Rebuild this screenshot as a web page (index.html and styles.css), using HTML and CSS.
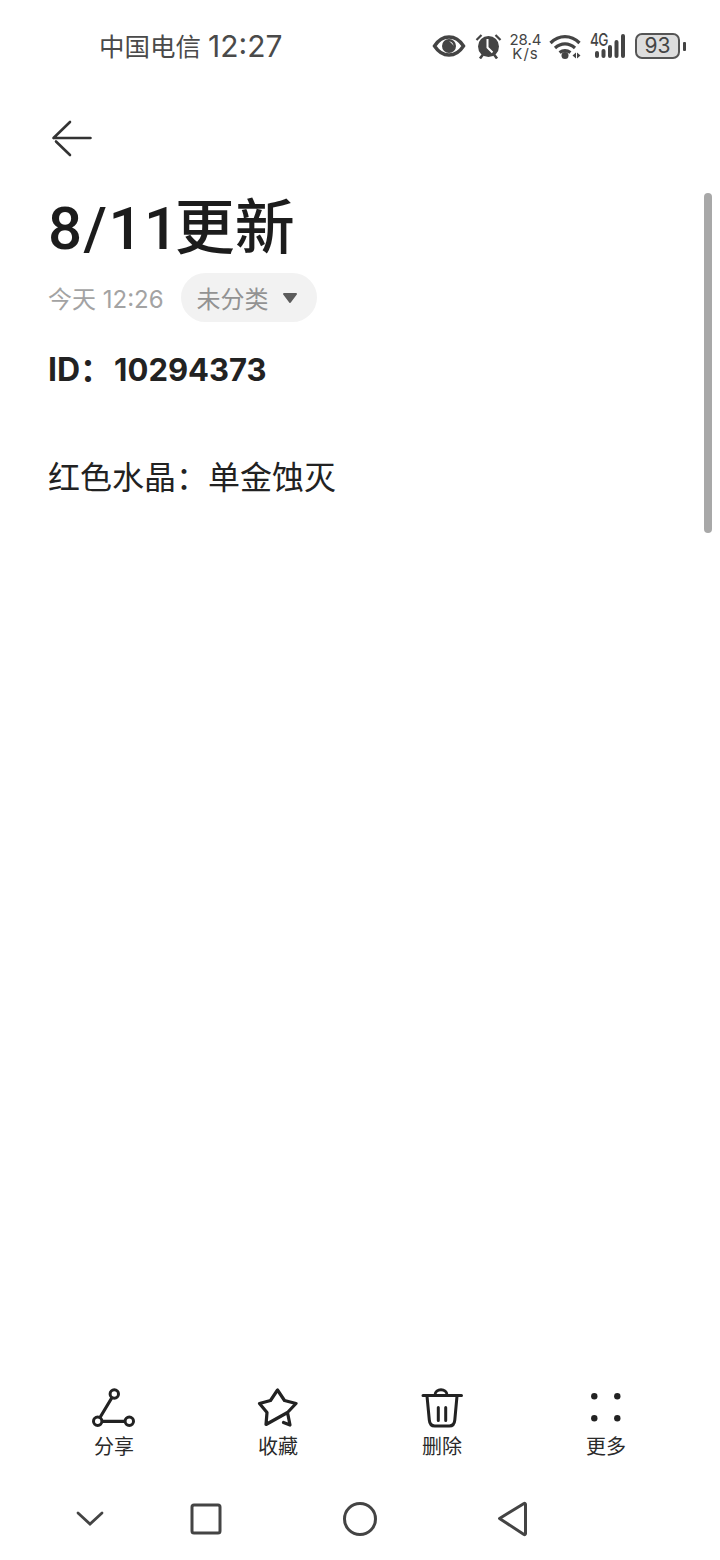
FILE: index.html
```html
<!DOCTYPE html>
<html lang="zh-CN">
<head>
<meta charset="UTF-8" />
<title>8/11更新</title>
<link rel="stylesheet" href="styles.css">
</head>
<body>
<div class="phone">
  <div class="status-bar">
    <div class="status-left"><span class="carrier">中国电信</span><span class="clock">12:27</span></div>
    <div class="status-right">
      <svg width="34" height="24" viewBox="0 0 34 24">
        <path d="M2.500 12C7 5 12 3 17 3s10 2 14.500 9C27 19 22 21 17 21S7 19 2.500 12z" fill="none" stroke="#444" stroke-width="3.400"/>
        <circle cx="17" cy="12" r="7" fill="#444"/>
        <path d="M17 7.500c2.500 0 4.500 2 4.500 4.500-1-2-2.500-3.500-4.500-4.500z" fill="#fff"/>
      </svg>
      <svg width="28" height="26" viewBox="0 0 28 26">
        <circle cx="14.500" cy="13.500" r="10.500" fill="#444"/>
        <path d="M13.500 6v8.500l5 5" fill="none" stroke="#fff" stroke-width="2"/>
        <path d="M2.500 7l5-5M26.500 7l-5-5" stroke="#444" stroke-width="2.200"/>
        <path d="M6 25.500l3-4M23 25.500l-3-4" stroke="#444" stroke-width="2.600"/>
      </svg>
      <div class="speed"><span class="speed-num">28.4</span><span class="speed-unit">K/s</span></div>
      <svg width="33" height="26" viewBox="0 0 33 26">
        <path d="M1.500 10C10 1.500 22 1.500 30.500 10M6 15c6-5.500 14-5.500 20 0M10.500 19.500c3.500-2.500 7.500-2.500 11 0" fill="none" stroke="#444" stroke-width="3.200"/>
        <circle cx="16" cy="22.500" r="3.500" fill="#444"/>
        <path d="M23.500 22.500l3.500-3v6zM28 19.500l3.500 3-3.500 3z" fill="#444"/>
      </svg>
      <div class="signal">
        <span class="net">4G</span>
        <svg width="37" height="26" viewBox="0 0 37 26">
          <g fill="#444">
            <rect x="5" y="18" width="4" height="7" rx="2"/>
            <rect x="11.500" y="16" width="4" height="9" rx="2"/>
            <rect x="18" y="12" width="4" height="13" rx="2"/>
            <rect x="24.500" y="7" width="4" height="18" rx="2"/>
            <rect x="31" y="1" width="4" height="24" rx="2"/>
          </g>
        </svg>
      </div>
      <div class="battery">
        <div class="battery-body">93</div>
        <div class="battery-tip"></div>
      </div>
    </div>
  </div>

  <div class="toolbar">
    <svg width="42" height="40" viewBox="0 0 42 40">
      <path d="M19 2L2.500 18M2.500 18H39.500M5 21.500L19 35" fill="none" stroke="#333" stroke-width="2.600" stroke-linecap="round"/>
    </svg>
  </div>

  <h1 class="note-title"><span class="title-num">8/11</span>更新</h1>
  <div class="note-meta">
    <span class="note-date">今天 12:26</span>
    <span class="category">未分类
      <svg class="caret" width="16" height="12" viewBox="0 0 16 12">
        <path d="M2 2h12L8 10z" fill="#5c5c5c" stroke="#5c5c5c" stroke-width="2" stroke-linejoin="round"/>
      </svg>
    </span>
  </div>
  <p class="note-id">ID：<span class="id-num">10294373</span></p>
  <p class="note-text">红色水晶：单金蚀灭</p>

  <div class="scrollbar"></div>

  <div class="actions">
    <div class="action">
      <svg width="46" height="42" viewBox="0 0 46 42">
        <path d="M21 9.500L9 29.500M11 33.300H34" fill="none" stroke="#222" stroke-width="3.200"/>
        <circle cx="23.300" cy="6" r="4.200" fill="none" stroke="#222" stroke-width="3"/>
        <circle cx="6.700" cy="33.300" r="4.200" fill="none" stroke="#222" stroke-width="3"/>
        <circle cx="38.300" cy="33.300" r="4.200" fill="none" stroke="#222" stroke-width="3"/>
      </svg>
      <span>分享</span>
    </div>
    <div class="action">
      <svg width="46" height="42" viewBox="0 0 46 42">
        <path d="M28.500 34.500L35 37L32.500 24.500L41 15.500L29.500 12.500L22.500 2L15.500 12.500L4.500 15.500L12 24.500L11 36.500L32.500 24.500" fill="none" stroke="#222" stroke-width="3.200" stroke-linejoin="round" stroke-linecap="round"/>
      </svg>
      <span>收藏</span>
    </div>
    <div class="action">
      <svg width="46" height="42" viewBox="0 0 46 42">
        <path d="M4 7.500H42.500M16 7c0-7 12-7 12 0M8 8l2.300 24c.3 3.500 2 6 5.500 6h14.500c3.500 0 5.200-2.500 5.500-6L38 8M19.300 19.500v13M26.700 19.500v13" fill="none" stroke="#222" stroke-width="3" stroke-linecap="round"/>
      </svg>
      <span>删除</span>
    </div>
    <div class="action">
      <svg width="46" height="42" viewBox="0 0 46 42">
        <g fill="#222">
          <circle cx="11.300" cy="8.300" r="3.200"/>
          <circle cx="34.300" cy="8.300" r="3.200"/>
          <circle cx="11.300" cy="30.300" r="3.200"/>
          <circle cx="34.300" cy="30.300" r="3.200"/>
        </g>
      </svg>
      <span>更多</span>
    </div>
  </div>

  <div class="nav-bar">
    <svg width="30" height="20" viewBox="0 0 30 20">
      <path d="M3 4l12 11L27 4" fill="none" stroke="#444" stroke-width="2.800" stroke-linecap="round"/>
    </svg>
    <svg width="32" height="32" viewBox="0 0 32 32">
      <rect x="2" y="2" width="28" height="28" rx="2" fill="none" stroke="#444" stroke-width="3"/>
    </svg>
    <svg width="36" height="36" viewBox="0 0 36 36">
      <circle cx="18" cy="18" r="15.500" fill="none" stroke="#444" stroke-width="3"/>
    </svg>
    <svg width="32" height="36" viewBox="0 0 32 36">
      <path d="M2.500 17.500L27 2.500c.8-.4 1.500 0 1.500 1v29c0 1-.7 1.400-1.500 1z" fill="none" stroke="#444" stroke-width="3" stroke-linejoin="round"/>
    </svg>
  </div>
</div>
</body>
</html>
```

FILE: styles.css
```css
* {
  box-sizing: border-box;
}
html, body {
  margin: 0;
  padding: 0;
  background: #fff;
}
body {
  font-family: Inter, "Noto Sans CJK SC", sans-serif;
}
.phone {
  position: relative;
  display: flex;
  flex-direction: column;
  width: 720px;
  height: 1560px;
  overflow: hidden;
  padding-top: 26px;
}

/* status bar */
.status-bar {
  display: flex;
  justify-content: space-between;
  align-items: center;
  height: 40px;
  padding: 0 34px 0 99px;
}
.status-left {
  display: flex;
  align-items: center;
  gap: 7px;
  color: #4a4a4a;
}
.carrier {
  padding-bottom: 3px;
  font-size: 25.500px;
}
.clock {
  font-size: 30px;
}
.status-right {
  display: flex;
  align-items: center;
  gap: 8px;
}
.speed {
  display: flex;
  flex-direction: column;
  align-items: center;
  width: 31px;
  color: #444;
}
.speed-num {
  font-size: 15px;
  line-height: 15px;
}
.speed-unit {
  font-size: 15px;
  line-height: 13px;
  letter-spacing: 1px;
}
.signal {
  position: relative;
  width: 37px;
  height: 26px;
}
.signal svg {
  display: block;
}
.net {
  position: absolute;
  top: 0;
  left: 0;
  font-size: 17px;
  line-height: 14px;
  font-weight: 500;
  letter-spacing: -1px;
  color: #444;
  transform: scaleX(.8);
  transform-origin: left;
}
.battery {
  display: flex;
  align-items: center;
  gap: 3px;
}
.battery-body {
  width: 45px;
  height: 26px;
  border: 2px solid #555;
  border-radius: 7px;
  background: #ddd;
  font-size: 21px;
  line-height: 22px;
  text-align: center;
  color: #444;
}
.battery-tip {
  width: 3px;
  height: 9px;
  border-radius: 1px;
  background: #444;
}

/* note */
.toolbar {
  height: 40px;
  margin-top: 54px;
  padding-left: 51px;
}
.toolbar svg {
  display: block;
}
.note-title {
  margin: 31px 0 0 48px;
  font-family: Roboto, "Noto Sans CJK SC", sans-serif;
  font-size: 60px;
  line-height: 76px;
  font-weight: 500;
  color: #1c1c1c;
}
.title-num {
  margin-right: -5px;
  letter-spacing: 1.500px;
}
.note-meta {
  display: flex;
  align-items: center;
  gap: 17px;
  margin: 6px 0 0 48px;
}
.note-date {
  font-size: 24px;
  color: #a3a3a3;
}
.category {
  display: flex;
  align-items: center;
  gap: 13px;
  height: 49px;
  padding: 0 19px 0 16px;
  border-radius: 25px;
  background: #f2f2f2;
  font-size: 24px;
  color: #929292;
}
.note-id {
  margin: 26px 0 0 48px;
  font-size: 32px;
  line-height: 44px;
  font-weight: 700;
  color: #222;
}
.id-num {
  margin-left: 2px;
  font-size: 31px;
}
.note-text {
  margin: 64px 0 0 48px;
  font-size: 32px;
  line-height: 44px;
  color: #222;
}
.scrollbar {
  position: absolute;
  top: 193px;
  left: 704px;
  width: 8px;
  height: 340px;
  border-radius: 4px;
  background: #a8a8a8;
}

/* bottom */
.actions {
  display: grid;
  grid-template-columns: repeat(4, 164px);
  margin-top: auto;
  padding-left: 32px;
}
.action {
  display: flex;
  flex-direction: column;
  align-items: center;
  gap: 3px;
  font-size: 20px;
  line-height: 28px;
  color: #2a2a2a;
}
.action svg {
  display: block;
}
.nav-bar {
  display: grid;
  grid-template-columns: 115px 152px 155px 32px;
  align-items: center;
  height: 36px;
  margin: 40px 0 23px;
  padding-left: 75px;
}
```
